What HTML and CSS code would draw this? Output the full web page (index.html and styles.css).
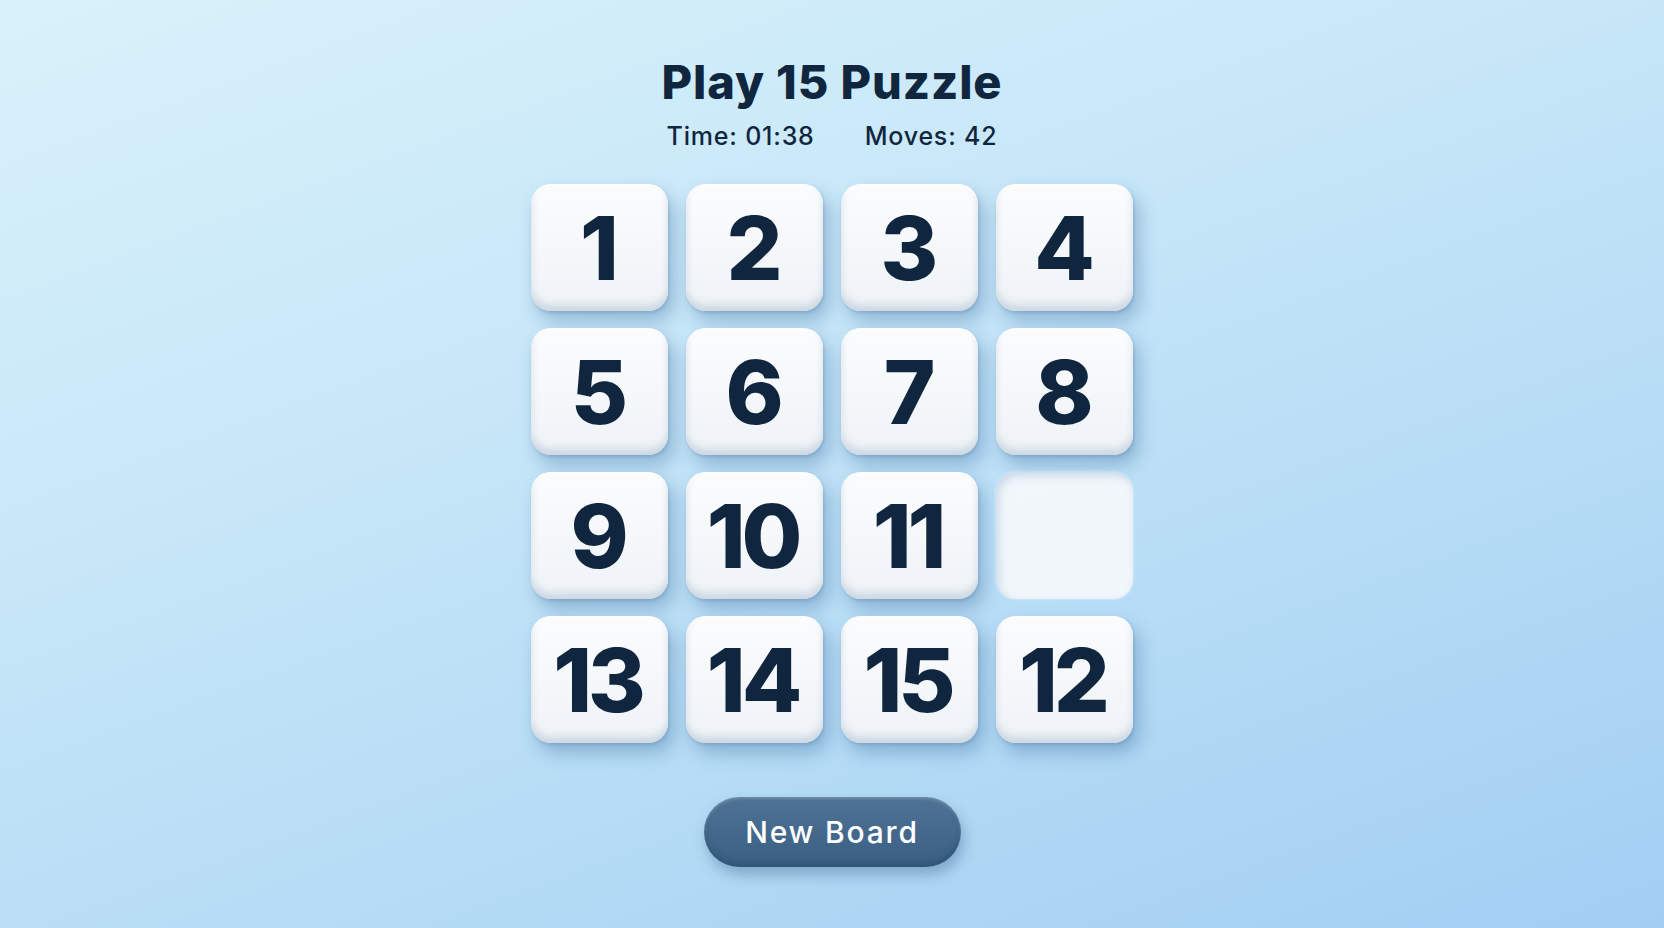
FILE: index.html
```html
<!DOCTYPE html>
<html lang="en">
<head>
  <meta charset="UTF-8" />
  <meta name="viewport" content="width=device-width, initial-scale=1.0" />
  <title>Play 15 Puzzle</title>
  <link rel="stylesheet" href="styles.css">
</head>
<body>
  <main class="game">
    <h1 class="title">Play 15 Puzzle</h1>

    <div class="stats">
      <span class="stat">Time: <span id="time">01:38</span></span>
      <span class="stat">Moves: <span id="moves">42</span></span>
    </div>

    <div class="board" id="board">
      <div class="tile">1</div>
      <div class="tile">2</div>
      <div class="tile">3</div>
      <div class="tile">4</div>
      <div class="tile">5</div>
      <div class="tile">6</div>
      <div class="tile">7</div>
      <div class="tile">8</div>
      <div class="tile">9</div>
      <div class="tile">10</div>
      <div class="tile">11</div>
      <div class="tile empty"></div>
      <div class="tile">13</div>
      <div class="tile">14</div>
      <div class="tile">15</div>
      <div class="tile">12</div>
    </div>

    <button class="new-board" id="new-board">New Board</button>
  </main>
</body>
</html>
```

FILE: styles.css
```css
:root {
  --ink: #10263f;
  --tile-top: #fbfcfd;
  --tile-bottom: #eef2f6;
  --button-top: #4f7396;
  --button-bottom: #395f83;
}

* {
  box-sizing: border-box;
}

html, body {
  height: 100%;
}

body {
  margin: 0;
  font-family: Inter, "Noto Sans", sans-serif;
  color: var(--ink);
  background: linear-gradient(160deg, #d9f2fb 0%, #c6e6f8 40%, #b3daf5 72%, #a3cef3 100%);
}

.game {
  display: flex;
  flex-direction: column;
  align-items: center;
  padding-top: 56px;
}

.title {
  margin: 0;
  font-size: 47px;
  line-height: 52px;
  font-weight: 800;
  letter-spacing: 0.9px;
}

.stats {
  display: flex;
  gap: 50px;
  margin-top: 13px;
  font-size: 25px;
  line-height: 30px;
  font-weight: 500;
  letter-spacing: 0.8px;
}

.board {
  display: grid;
  grid-template-columns: repeat(4, 137px);
  grid-auto-rows: 127px;
  column-gap: 18px;
  row-gap: 17px;
  margin-top: 33px;
}

.tile {
  display: flex;
  align-items: center;
  justify-content: center;
  border-radius: 20px;
  background: linear-gradient(180deg, var(--tile-top) 0%, #f4f7fa 60%, var(--tile-bottom) 100%);
  box-shadow:
    6px 10px 18px rgba(62, 112, 162, 0.4),
    1px 2px 3px rgba(80, 120, 160, 0.25),
    inset 0 -6px 7px rgba(165, 184, 204, 0.45),
    inset 0 2px 2px rgba(255, 255, 255, 0.9);
  font-size: 88px;
  font-weight: 800;
  letter-spacing: -4px;
  padding-right: 4px;
}

.tile.empty {
  background: rgba(244, 248, 251, 0.94);
  box-shadow:
    inset 3px 4px 8px rgba(150, 180, 210, 0.45),
    0 0 3px rgba(255, 255, 255, 0.6);
  filter: blur(0.6px);
}

.new-board {
  margin-top: 54px;
  width: 257px;
  height: 70px;
  border: none;
  border-radius: 35px;
  background: linear-gradient(180deg, var(--button-top) 0%, var(--button-bottom) 100%);
  box-shadow:
    3px 8px 14px rgba(40, 80, 120, 0.35),
    inset 0 2px 3px rgba(255, 255, 255, 0.2),
    inset 0 -4px 6px rgba(20, 50, 80, 0.25);
  color: #ffffff;
  font-family: inherit;
  font-size: 30px;
  font-weight: 500;
  letter-spacing: 1.8px;
  cursor: pointer;
}
```
